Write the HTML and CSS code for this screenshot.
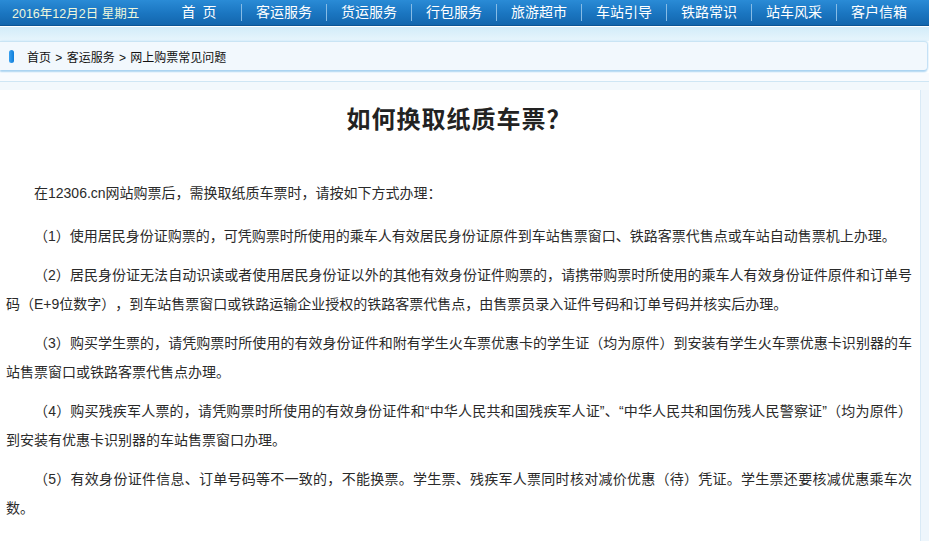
FILE: index.html
```html
<!DOCTYPE html>
<html lang="zh-CN">
<head>
<meta charset="utf-8">
<title>如何换取纸质车票？</title>
<link rel="stylesheet" href="styles.css">
</head>
<body>
<header class="topbar">
  <div class="date">2016年12月2日 星期五</div>
  <ul class="nav">
    <li>首&ensp;页</li>
    <li>客运服务</li>
    <li>货运服务</li>
    <li>行包服务</li>
    <li>旅游超市</li>
    <li>车站引导</li>
    <li>铁路常识</li>
    <li>站车风采</li>
    <li class="last">客户信箱</li>
  </ul>
</header>
<div class="band"></div>
<div class="crumb">
  <span class="pill"></span>
  <span class="crumb-text">首页 &gt; 客运服务 &gt; 网上购票常见问题</span>
</div>
<div class="gap1"></div>
<div class="gap2"></div>
<main class="main">
  <article class="content">
    <h1 class="title">如何换取纸质车票？</h1>
    <p class="lead">在12306.cn网站购票后，需换取纸质车票时，请按如下方式办理：</p>
    <p>（1）使用居民身份证购票的，可凭购票时所使用的乘车人有效居民身份证原件到车站售票窗口、铁路客票代售点或车站自动售票机上办理。</p>
    <p>（2）居民身份证无法自动识读或者使用居民身份证以外的其他有效身份证件购票的，请携带购票时所使用的乘车人有效身份证件原件和订单号码（E+9位数字），到车站售票窗口或铁路运输企业授权的铁路客票代售点，由售票员录入证件号码和订单号码并核实后办理。</p>
    <p>（3）购买学生票的，请凭购票时所使用的有效身份证件和附有学生火车票优惠卡的学生证（均为原件）到安装有学生火车票优惠卡识别器的车站售票窗口或铁路客票代售点办理。</p>
    <p>（4）购买残疾军人票的，请凭购票时所使用的有效身份证件和“中华人民共和国残疾军人证”、“中华人民共和国伤残人民警察证”（均为原件）到安装有优惠卡识别器的车站售票窗口办理。</p>
    <p>（5）有效身份证件信息、订单号码等不一致的，不能换票。学生票、残疾军人票同时核对减价优惠（待）凭证。学生票还要核减优惠乘车次数。</p>
  </article>
  <aside class="side"></aside>
</main>
</body>
</html>
```
FILE: styles.css
```css
html, body {
  margin: 0;
  padding: 0;
  background: #ffffff;
}
body {
  width: 929px;
  overflow: hidden;
  font-family: "Liberation Sans", "Noto Sans CJK SC", sans-serif;
  color: #222;
}

.topbar {
  display: flex;
  align-items: center;
  height: 25px;
  background: linear-gradient(#2a8bd6, #1a75c0 55%, #1366ad);
  border-bottom: 1px solid #0c5594;
  box-shadow: 0 1px 0 #ffffff;
  overflow: hidden;
}
.date {
  flex: none;
  width: 157px;
  box-sizing: border-box;
  padding-left: 12px;
  font-size: 12.5px;
  color: #eef7dc;
  white-space: nowrap;
}
.nav {
  display: flex;
  align-items: center;
  margin: 0;
  padding: 0;
  list-style: none;
}
.nav li {
  flex: none;
  width: 84px;
  height: 17px;
  line-height: 17px;
  text-align: center;
  font-size: 14px;
  color: #ffffff;
  border-right: 1px solid #86bce6;
  white-space: nowrap;
}
.nav li.last {
  border-right: none;
}

.band {
  height: 14px;
  margin-top: 1px;
  background: linear-gradient(#d2ecf9, #e7f5fc);
}
.crumb {
  display: flex;
  align-items: center;
  height: 28px;
  margin-right: 2px;
  background: #f2f8fd;
  border-top: 1px solid #c9e4f4;
  border-radius: 0 3px 3px 0;
  box-shadow: 0 2px 2px #a8d2f1, 1px 0 2px #bfdff5;
}
.pill {
  flex: none;
  width: 5px;
  height: 13px;
  margin-left: 9px;
  border-radius: 3px;
  background: linear-gradient(90deg, #3aa0ee, #0e7edb);
}
.crumb-text {
  margin-left: 13px;
  font-size: 12px;
  color: #111;
  word-spacing: 1px;
}
.gap1 {
  height: 8px;
  margin-top: 3px;
  background: #f8fbfe;
  border-bottom: 1px solid #cfe6f4;
}
.gap2 {
  height: 8px;
  background: #f2f8fc;
}

.main {
  display: flex;
  align-items: stretch;
  min-height: 460px;
}
.content {
  flex: none;
  width: 921px;
  box-sizing: border-box;
  padding: 15px 8px 20px 6px;
  background: #ffffff;
  border-right: 1px solid #d9eaf6;
}
.side {
  flex: 1;
  background: #eef6fc;
}
.title {
  margin: 0 0 44px;
  font-size: 24px;
  line-height: 30px;
  font-weight: 700;
  letter-spacing: 1px;
  text-align: center;
  color: #222;
}
.content p {
  margin: 0 0 10px;
  font-size: 14px;
  line-height: 29px;
  text-indent: 28px;
  text-align: justify;
  text-spacing-trim: space-all;
  color: #2a2a2a;
}
.content p.lead {
  margin-bottom: 14px;
}
```
